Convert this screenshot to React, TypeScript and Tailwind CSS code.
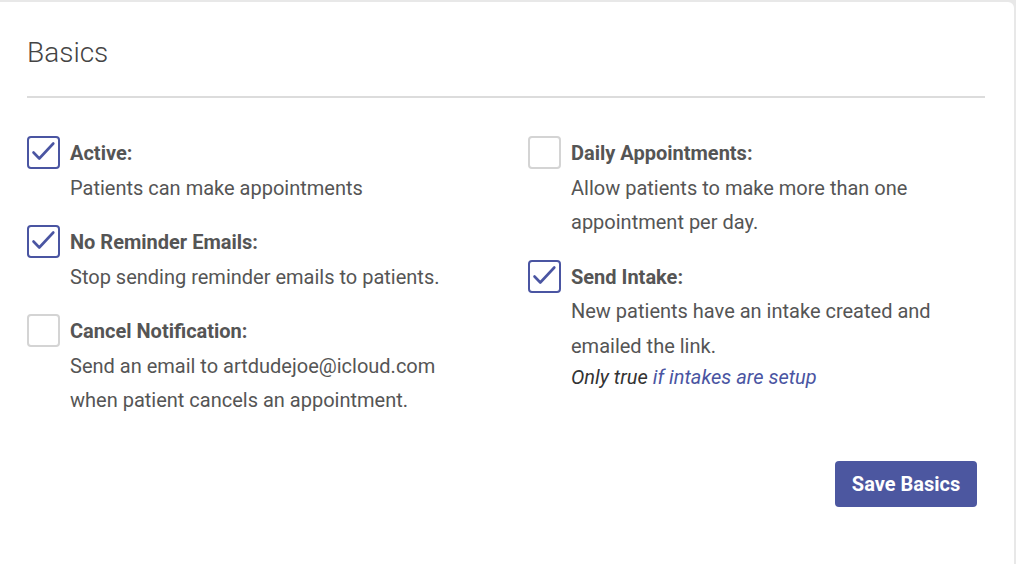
import { useState } from 'react';

interface Setting {
  key: string;
  label: string;
  lines: string[];
  note?: boolean;
}

const LEFT: Setting[] = [
  { key: 'active', label: 'Active:', lines: ['Patients can make appointments'] },
  { key: 'noReminder', label: 'No Reminder Emails:', lines: ['Stop sending reminder emails to patients.'] },
  {
    key: 'cancelNotify',
    label: 'Cancel Notification:',
    lines: ['Send an email to artdudejoe@icloud.com', 'when patient cancels an appointment.'],
  },
];

const RIGHT: Setting[] = [
  {
    key: 'daily',
    label: 'Daily Appointments:',
    lines: ['Allow patients to make more than one', 'appointment per day.'],
  },
  {
    key: 'sendIntake',
    label: 'Send Intake:',
    lines: ['New patients have an intake created and', 'emailed the link.'],
    note: true,
  },
];

function Checkbox({ checked, onToggle }: { checked: boolean; onToggle: () => void }) {
  return (
    <button
      type="button"
      onClick={onToggle}
      className={
        checked
          ? 'w-[33px] h-[33px] shrink-0 rounded-[4px] border-2 border-[#4a55a2] bg-white flex items-center justify-center'
          : 'w-[33px] h-[33px] shrink-0 rounded-[4px] border-2 border-[#d4d4d4] bg-white'
      }
    >
      {checked && (
        <svg width="33" height="33" viewBox="0 0 33 33" className="-m-[2px]">
          <polyline
            points="6.5,16.5 12.3,22.5 26.3,7.5"
            fill="none"
            stroke="#4a55a2"
            strokeWidth="2.6"
            strokeLinecap="round"
            strokeLinejoin="round"
          />
        </svg>
      )}
    </button>
  );
}

function SettingRow({ item, checked, onToggle }: { item: Setting; checked: boolean; onToggle: () => void }) {
  return (
    <div className="flex gap-[10px]">
      <Checkbox checked={checked} onToggle={onToggle} />
      <div className="text-[20px] text-[#555]">
        <div className="font-bold leading-[34.5px]">{item.label}</div>
        {item.lines.map((l) => (
          <div key={l} className="leading-[34.5px]">{l}</div>
        ))}
        {item.note && (
          <div className="italic leading-[28px] text-[#333]">
            Only true <a className="text-[#4a55a2] cursor-pointer">if intakes are setup</a>
          </div>
        )}
      </div>
    </div>
  );
}

export default function App() {
  const [values, setValues] = useState<Record<string, boolean>>({
    active: true,
    noReminder: true,
    cancelNotify: false,
    daily: false,
    sendIntake: true,
  });

  const toggle = (k: string) => setValues((v) => ({ ...v, [k]: !v[k] }));

  return (
    <div className="bg-[#e8e8e8] pt-[2px] pr-[2px] h-[564px] overflow-hidden" style={{ fontFamily: 'Roboto, "Liberation Sans", sans-serif' }}>
      <div className="bg-white rounded-tr-[6px] h-full pl-[27px] pr-[29px] pt-[34px]">
        <h2 className="text-[28px] font-light text-[#444] leading-[34px]">Basics</h2>
        <div className="mt-[26px] h-[2px] bg-[#dcdcdc]" />

        <div className="grid grid-cols-2 gap-x-[44px] mt-[38px]">
          <div className="flex flex-col gap-[20px]">
            {LEFT.map((item) => (
              <SettingRow key={item.key} item={item} checked={values[item.key]} onToggle={() => toggle(item.key)} />
            ))}
          </div>
          <div className="flex flex-col gap-[20px]">
            {RIGHT.map((item) => (
              <SettingRow key={item.key} item={item} checked={values[item.key]} onToggle={() => toggle(item.key)} />
            ))}
          </div>
        </div>

        <div className="flex justify-end mt-[43px] pr-[8px]">
          <button className="h-[46px] w-[142px] rounded-[4px] bg-[#4c57a0] text-white font-bold text-[20px]">
            Save Basics
          </button>
        </div>
      </div>
    </div>
  );
}
